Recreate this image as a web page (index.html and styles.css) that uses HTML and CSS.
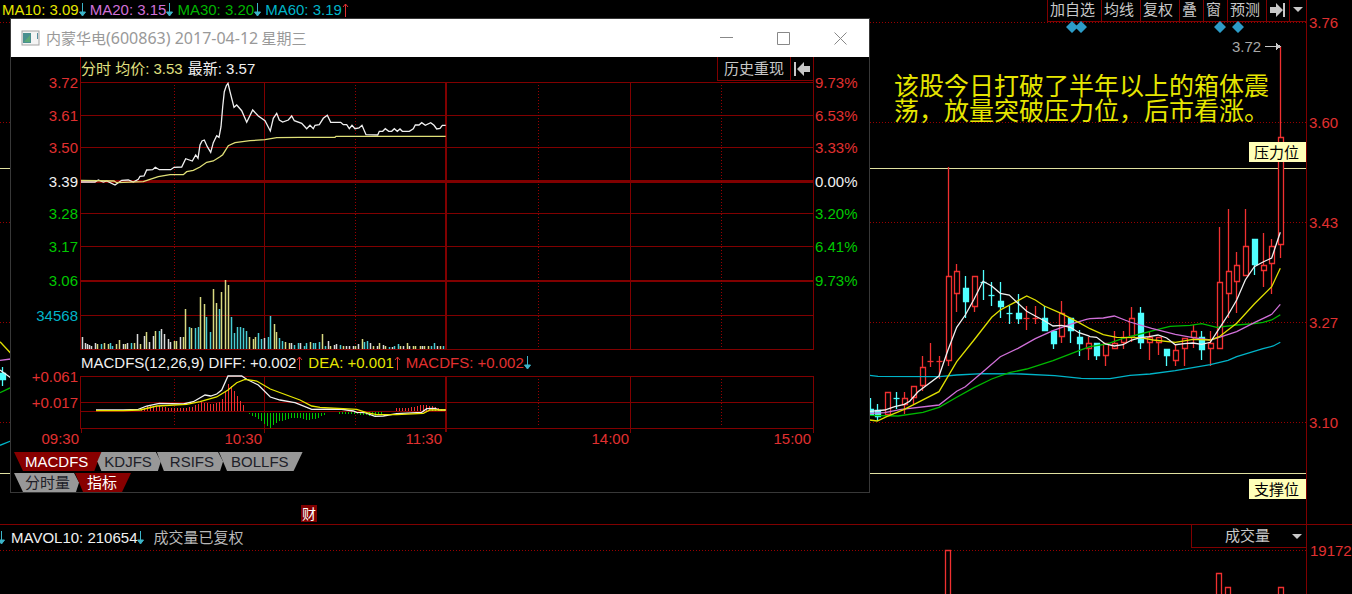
FILE: index.html
```html
<!DOCTYPE html>
<html lang="zh-CN">
<head>
<meta charset="utf-8">
<title>内蒙华电 600863</title>
<link rel="stylesheet" href="styles.css">
</head>
<body>
<svg class="defs" aria-hidden="true">
  <symbol id="down" viewBox="0 0 7 14"><path d="M3.500 0V11M0.500 9L3.500 13L6.500 9Z" fill="#3cb4c8" stroke="#3cb4c8"/></symbol>
  <symbol id="up" viewBox="0 0 7 14"><path d="M3.500 14V1M1 4L3.500 1L6 4" fill="none" stroke="#e03030"/></symbol>
</svg>
<main class="app">
  <section class="panel">
    <header class="bar price-bar">
      <div class="legend">
        <span class="yellow">MA10: 3.09</span><svg class="arrow"><use href="#down"/></svg>
        <span class="violet">MA20: 3.15</span><svg class="arrow"><use href="#down"/></svg>
        <span class="green">MA30: 3.20</span><svg class="arrow"><use href="#down"/></svg>
        <span class="cyan">MA60: 3.19</span><svg class="arrow"><use href="#up"/></svg>
      </div>
      <div class="toolbar">
        <button>加自选</button><button>均线</button><button>复权</button><button>叠</button><button>窗</button><button>预测</button>
        <button class="tool-end" aria-label="最后"><svg width="16" height="14" viewBox="0 0 16 14"><path d="M0 4H6V0L13 7L6 14V10H0ZM13 0H15V14H13Z" fill="#c8c8c8"/></svg></button>
        <button class="tool-menu" aria-label="更多"><svg width="10" height="6" viewBox="0 0 10 6"><path d="M0 0H10L5 5Z" fill="#c8c8c8"/></svg></button>
      </div>
    </header>
    <svg id="price" class="chart" viewBox="0 22 1352 502">
      <g class="dots"><path d="M0 22.500H1306M0 122.500H1306M0 222.500H1306M0 322.500H1306M0 422.500H1306"/></g>
      <path class="axis" d="M1306.500 22V524"/>
      <path class="level" d="M0 168.500H1306M0 473.500H1306"/>
      <g class="diamonds"><path d="M1066 27L1072 21L1078 27L1072 33ZM1075 27L1081 21L1087 27L1081 33ZM1214 27L1220 21L1226 27L1220 33ZM1232 27L1238 21L1244 27L1238 33Z"/></g>
      <g id="candles"></g>
      <g id="averages"></g>
      <text class="note" x="1232" y="52">3.72</text>
      <path d="M1265 46.500H1277" stroke="#c8c8c8"/><path d="M1276 43L1281 46.500L1276 50Z" fill="#c8c8c8"/>
      <foreignObject x="894" y="74" width="376" height="60"><p class="comment">该股今日打破了半年以上的箱体震荡，放量突破压力位，后市看涨。</p></foreignObject>
      <g class="flag"><rect x="1249" y="142" width="57" height="20"/><text x="1254" y="158">压力位</text></g>
      <g class="flag"><rect x="1249" y="479" width="57" height="20"/><text x="1254" y="495">支撑位</text></g>
      <g class="badge"><rect x="301" y="505" width="16" height="17"/><text x="302" y="519">财</text></g>
      <g class="scale"><text x="1309" y="28">3.76</text><text x="1309" y="128">3.60</text><text x="1309" y="228">3.43</text><text x="1309" y="328">3.27</text><text x="1309" y="428">3.10</text></g>
    </svg>
  </section>

  <section class="panel">
    <header class="bar volume-bar">
      <div class="legend">
        <svg class="arrow"><use href="#down"/></svg>
        <span class="white">MAVOL10: 210654</span><svg class="arrow"><use href="#down"/></svg>
        <span class="silver">成交量已复权</span>
      </div>
      <div class="picker">
        <select aria-label="指标"><option>成交量</option></select>
      </div>
    </header>
    <svg id="volume" class="chart" viewBox="0 550 1352 44">
      <g class="dots"><path d="M0 550.500H1306"/></g>
      <path class="axis" d="M1306.500 550V594"/>
      <g class="hollow"><path d="M945.500 600V550.500H950.500V600M1216.500 600V573.500H1221.500V600M1225.500 600V587.500H1230.500V600M1278.500 600V587.500H1283.500V600"/></g>
      <g class="scale"><text x="1310" y="556">19172</text></g>
    </svg>
  </section>

  <section class="window" role="dialog" aria-labelledby="window-title">
    <header class="titlebar">
      <svg width="20" height="16" viewBox="0 0 20 16"><rect x="1" y="1" width="17" height="14" fill="#f4f4f4" stroke="#a4a4a4"/><rect x="2" y="3" width="8" height="10" fill="#4a9090"/><path d="M3 12L9 5V12Z" fill="#5aa878"/><path d="M16.500 3V9" stroke="#5a90a0"/></svg>
      <h1 id="window-title">内蒙华电<span>(600863) 2017-04-12</span> 星期三</h1>
      <button aria-label="最小化"><svg width="13" height="13"><path d="M0 5.500H13"/></svg></button>
      <button aria-label="最大化"><svg width="13" height="13"><path d="M0.500 0.500H12.500V12.500H0.500Z"/></svg></button>
      <button aria-label="关闭"><svg width="13" height="13"><path d="M0.500 0.500L12.500 12.500M12.500 0.500L0.500 12.500"/></svg></button>
    </header>
    <div class="intraday-bar">
      <p class="legend"><span class="cream">分时 均价: 3.53</span><span class="white">最新: 3.57</span></p>
      <div class="toolbar">
        <button class="replay">历史重现</button>
        <button class="tool-first" aria-label="最前"><svg width="16" height="14" viewBox="0 0 16 14"><path d="M16 4H10V0L3 7L10 14V10H16ZM0 0H2V14H0Z" fill="#c8c8c8"/></svg></button>
      </div>
    </div>
    <svg class="chart" viewBox="11 81 858 270">
      <g class="grid">
        <path d="M81 82.500H813M81 115.500H813M81 147.500H813M81 213.500H813M81 246.500H813M81 315.500H813M81 349.500H813M80.500 81V350M264.500 82V350M630.500 82V350M813.500 81V350"/>
        <path class="thick" d="M81 280.500H813M446 82V350"/>
        <path class="zero" d="M81 181.500H813"/>
      </g>
      <g class="dots"><path d="M174.500 85V349M355.500 85V349M538.500 85V349M721.500 85V349"/></g>
      <g id="turnover"></g>
      <g id="intraday"></g>
      <g class="scale end"><text x="78" y="88">3.72</text><text x="78" y="121">3.61</text><text x="78" y="153">3.50</text><text class="mid" x="78" y="187">3.39</text><text class="low" x="78" y="219">3.28</text><text class="low" x="78" y="252">3.17</text><text class="low" x="78" y="286">3.06</text><text class="vol" x="78" y="321">34568</text></g>
      <g class="scale"><text x="815" y="88">9.73%</text><text x="815" y="121">6.53%</text><text x="815" y="153">3.33%</text><text class="mid" x="815" y="187">0.00%</text><text class="low" x="815" y="219">3.20%</text><text class="low" x="815" y="252">6.41%</text><text class="low" x="815" y="286">9.73%</text></g>
    </svg>
    <div class="legend macd-bar">
      <span class="white">MACDFS(12,26,9)</span>
      <span class="white">DIFF: +0.002</span><svg class="arrow"><use href="#up"/></svg>
      <span class="yellow">DEA: +0.001</span><svg class="arrow"><use href="#up"/></svg>
      <span class="red">MACDFS: +0.002</span><svg class="arrow"><use href="#down"/></svg>
    </div>
    <svg class="chart" viewBox="11 375 858 77">
      <g class="grid">
        <path d="M81 376.500H813M81 402.500H813M81 411.500H446M81 428.500H813M80.500 376V429M81.500 429V433M264.500 376V433M630.500 376V433M813.500 376V433"/>
        <path class="thick" d="M446 376V432"/>
      </g>
      <g class="dots"><path d="M174.500 379V427M355.500 379V427M538.500 379V427M721.500 379V427"/></g>
      <g id="macd"></g>
      <g class="scale end"><text x="78" y="382">+0.061</text><text x="78" y="408">+0.017</text><text x="79" y="444">09:30</text><text x="262" y="444">10:30</text><text x="442" y="444">11:30</text><text x="629" y="444">14:00</text><text x="811" y="444">15:00</text></g>
    </svg>
    <nav class="tabs" aria-label="指标">
      <button class="tab first active">MACDFS</button><button class="tab">KDJFS</button><button class="tab notch">RSIFS</button><button class="tab last">BOLLFS</button>
    </nav>
    <nav class="tabs" aria-label="视图">
      <button class="tab start">分时量</button><button class="tab last active">指标</button>
    </nav>
  </section>
</main>
<script src="charts.js"></script>
</body>
</html>
```
FILE: styles.css
```css
* { box-sizing: border-box; }

body {
  margin: 0;
  background: #000;
  color: #c8c8c8;
  font: 15px/20px "Liberation Sans", "Noto Sans CJK SC", sans-serif;
}

button, select {
  margin: 0;
  padding: 0;
  border: 0;
  border-radius: 0;
  background: none;
  color: inherit;
  font: inherit;
}

button { white-space: nowrap; }

.defs { position: absolute; width: 0; height: 0; }
.app { position: relative; overflow: clip; }

.bar { display: flex; justify-content: space-between; padding-right: 45px; }
.price-bar { height: 22px; }
.volume-bar { height: 26px; border-top: 1px solid #800000; }

.legend { display: flex; align-items: center; margin: 0; white-space: pre; }
.price-bar .legend { padding-left: 2px; height: 19px; }
.volume-bar .legend .white { margin-left: 2px; }
.volume-bar .legend .silver { margin-left: 5px; }
.volume-bar .arrow:first-child { margin-left: -2px; }
.arrow { width: 7px; height: 14px; margin-right: 4px; }

.yellow { color: #e6e600; }
.violet { color: #d070d8; }
.green { color: #00b400; }
.cyan { color: #00b4c8; }
.white { color: #f0f0f0; }
.silver { color: #b8b8b8; }
.cream { color: #e0e080; }
.red { color: #e03030; }

.toolbar { display: flex; border-right: 1px solid #800000; }
.toolbar button {
  display: flex;
  align-items: center;
  justify-content: center;
  padding: 0 6px 0 2px;
  border: solid #800000;
  border-width: 0 0 1px 1px;
}
.price-bar .toolbar button { padding-bottom: 2px; }
.toolbar .tool-end { width: 23px; padding-left: 2px; padding-right: 2px; }
.toolbar .tool-menu { width: 17px; padding-left: 2px; padding-right: 2px; }
.toolbar .replay { padding: 0 6px; }
.toolbar .tool-first { width: 23px; padding: 0 2px; }

.picker {
  position: relative;
  width: 116px;
  border-right: 1px solid #800000;
}
.picker select {
  display: block;
  width: 100%;
  height: 23px;
  padding-left: 33px;
  border: solid #800000;
  border-width: 0 0 1px 1px;
  appearance: none;
}
.picker::after {
  content: "";
  position: absolute;
  top: 9px;
  right: 4px;
  border: 5px solid transparent;
  border-top-color: #c8c8c8;
  border-bottom: 0;
}

.chart { display: block; width: 100%; height: auto; overflow: visible; }
.chart path { shape-rendering: crispEdges; }
.dots path { stroke: #980000; stroke-dasharray: 1 2; }
.axis, .grid path { fill: none; stroke: #800000; }
.grid .thick { stroke-width: 2; }
.grid .zero { stroke-width: 3; }
.level { stroke: #e0e0a0; }
.diamonds path { fill: #2c9cc8; shape-rendering: auto; }
.chart .hollow path { fill: none; stroke: #f03030; stroke-width: 1.3; shape-rendering: auto; }
.chart .hollow .box { fill: #000; }
.chart .solid path { fill: #50ffff; stroke: #50ffff; stroke-width: 1.3; shape-rendering: auto; }
.chart .line { fill: none; stroke-width: 1.3; shape-rendering: auto; }
.chart #turnover path { stroke-width: 1.5; shape-rendering: auto; }
.scale text { fill: #e03030; }
.scale .mid { fill: #f0f0f0; }
.scale .low { fill: #00c800; }
.scale .vol { fill: #00b4c8; }
.end { text-anchor: end; }
.note { fill: #a8a8a8; }
.comment {
  margin: 0;
  color: #e6e600;
  font-size: 25px;
  line-height: 25px;
}
.flag rect { fill: #ffffb8; }
.flag text { fill: #000; }
.badge rect { fill: #800000; }
.badge text { fill: #fff; font-size: 14px; }

.window {
  position: absolute;
  top: 18px;
  left: 10px;
  width: 860px;
  border: 1px solid #383838;
  background: #000;
}

.titlebar {
  display: flex;
  align-items: center;
  height: 38px;
  padding-left: 10px;
  background: #fff;
  color: #999;
}
.titlebar h1 {
  flex: 1;
  margin: 0 0 0 5px;
  font: 15px/20px "Noto Sans CJK SC", sans-serif;
}
.titlebar h1 span { font: 16px/20px "Noto Sans", sans-serif; }
.titlebar button { width: 57px; height: 36px; }
.titlebar button svg { display: block; margin: 0 auto; }
.titlebar button path { fill: none; stroke: #888; }

.intraday-bar {
  display: flex;
  justify-content: space-between;
  height: 24px;
  margin: 0 55px 0 69px;
  border-left: 1px solid #800000;
}
.intraday-bar .white { margin-left: 5px; }
.macd-bar { height: 24px; padding-left: 70px; }
.macd-bar .white:first-child { margin-right: 4px; }
.macd-bar .arrow { margin-right: 5px; }

.tabs { display: flex; height: 19px; margin-bottom: 2px; padding-left: 3px; }
.tabs:last-child { margin-bottom: 0; }
.tab {
  padding: 0 9px 0 7px;
  background: #989898;
  color: #202028;
  line-height: 19px;
}
.tab + .tab { margin-left: -4px; }
.tab.first {
  padding: 0 13px 0 11px;
  clip-path: polygon(0 0, 100% 0, calc(100% - 7px) 100%, 9px 100%);
}
.tab:not(.first):not(.last) { clip-path: polygon(4px 0, calc(100% - 5px) 0, 100% 50%, calc(100% - 3px) 100%, 4px 100%, 0 50%); }
.tab.notch:not(.last) {
  padding: 0 9px 0 13px;
  clip-path: polygon(0 0, calc(100% - 5px) 0, 100% 50%, calc(100% - 3px) 100%, 7px 100%);
}
.tab.start:not(.last) {
  padding: 0 9px 0 11px;
  clip-path: polygon(0 0, calc(100% - 5px) 0, 100% 50%, calc(100% - 3px) 100%, 9px 100%);
}
.tab.last {
  padding: 0 14px 0 12px;
  clip-path: polygon(0 0, 100% 0, calc(100% - 9px) 100%, 8px 100%);
}
.tab.active { background: #880000; color: #fff; }
```
FILE: charts.js
```js
const NS = "http://www.w3.org/2000/svg";

function add(parent, d, attrs) {
  const path = document.createElementNS(NS, "path");
  path.setAttribute("d", d);
  for (const key in attrs) path.setAttribute(key, attrs[key]);
  parent.appendChild(path);
}

// Series are stored in thirds of a pixel, relative to an origin.
function points(text, ox, oy) {
  return text.trim().split(/\s+/).map(p => {
    const [x, y] = p.split(",").map(Number);
    return [x / 3 + ox, y / 3 + oy];
  });
}

function line(id, color, ...parts) {
  const d = "M" + parts.flat().map(p => p.map(v => v.toFixed(1)).join(" ")).join("L");
  add(document.getElementById(id), d, { class: "line", stroke: color });
}

// Candles: kind (r hollow, c solid), x, body top, body bottom, high, low.
const candles = `c,870,409,414,398,414 c,877,410,416,404,421 r,887,392,414,392,414 c,896,398,399,392,409
r,904,398,404,392,414 r,913,386,397,386,404 r,922,367,385,356,391 r,930,361,362,343,367 r,939,361,362,356,379
r,948,276,360,167,366 r,956,271,293,264,312 c,965,288,301,276,318 r,974,276,306,276,312 c,983,282,283,270,300
c,991,295,296,282,306 c,1000,301,306,282,318 c,1009,313,314,306,324 c,1018,313,318,294,324 r,1026,318,319,306,330
r,1035,318,319,306,324 c,1044,318,330,306,330 c,1053,331,343,331,349 r,1061,313,336,301,343 c,1070,318,330,318,343
c,1079,337,343,330,356 r,1088,343,348,337,360 c,1096,343,355,343,360 r,1105,343,355,343,366 r,1114,343,348,331,348
r,1123,337,342,331,349 r,1131,318,336,307,342 c,1140,313,342,307,349 r,1149,337,342,331,360 r,1158,337,342,337,355
c,1166,349,355,349,366 r,1175,350,360,344,366 r,1184,338,348,338,366 r,1193,331,337,325,348 c,1201,337,349,331,360
r,1210,343,348,331,366 r,1219,282,348,227,348 r,1228,271,293,209,318 r,1236,265,281,252,313 r,1245,246,275,209,275
c,1254,239,264,239,275 r,1263,265,270,233,287 r,1271,246,263,239,294 r,1280,137,244,46,258 c,2,373,379,367,386`;

const root = document.getElementById("candles");
for (const kind of ["hollow", "solid"]) {
  const g = document.createElementNS(NS, "g");
  g.setAttribute("class", kind);
  root.appendChild(g);
  for (const row of candles.split(/\s+/)) {
    const [k, ...v] = row.split(",");
    if ((k === "r") !== (kind === "hollow")) continue;
    const [x, top, bottom, high, low] = v.map((n, i) => i ? Number(n) : Number(n) + 0.5);
    add(g, `M${x} ${high}V${low}`);
    if (bottom - top < 2) add(g, `M${x - 3} ${top + 0.5}H${x + 3}`);
    else add(g, `M${x - 2} ${top + 0.5}H${x + 3}V${bottom + 0.5}H${x - 2}Z`, { class: "box" });
  }
}

const L = t => points(t, 868, 240);
const R = t => points(t, 1090, 190);
line("averages", "#00b4c8", L("5,406 30,409 215,410 266,405 345,401 460,402 560,407 640,415 666,416"), R("0,566 60,566 120,556 180,552 256,542 361,524 414,511 440,500 519,476 550,468 571,457"));
line("averages", "#00b800", L("5,526 90,528 165,517 213,502 266,472 318,443 371,417 424,398 476,387 555,362 633,332"), R("0,470 50,462 99,445 151,432 204,418 240,409 300,406 335,401 380,412 440,405 493,401 519,397 545,390 571,374"));
line("averages", "#d070d8", L("5,520 50,518 100,508 213,495 266,454 292,440 345,395 397,350 450,325 502,296 555,272 607,253 655,238"), R("0,386 40,384 73,378 120,396 185,415 256,433 309,443 361,450 388,442 440,425 493,398 545,373 571,343"));
line("averages", "#e0e000", L("5,540 28,543 56,530 109,508 213,455 266,365 318,300 371,232 397,210 450,182 476,168 502,180 529,198 581,221 633,248"), R("0,416 40,434 80,442 151,443 190,450 256,457 309,448 361,450 388,440 440,400 493,342 545,290 571,235"));
line("averages", "#f0f0f0", L("5,514 50,510 80,500 109,493 125,484 150,455 213,408 240,330 266,262 292,225 318,178 345,124 371,138 397,160 424,165 450,190 476,214 502,228 529,242 555,258 581,256 607,262 633,278 660,287"), R("0,440 20,442 46,462 73,468 99,464 125,450 151,443 177,440 204,435 230,444 256,464 283,461 309,459 335,463 361,457 388,415 414,375 440,330 466,270 493,230 519,216 545,204 571,127"));
line("averages", "#e0e000", points("0,245 32,280", 0, 260));
line("averages", "#d070d8", points("0,301 32,297", 0, 260));
line("averages", "#f0f0f0", points("0,330 32,353", 0, 260));
line("averages", "#00b800", points("0,398 32,383", 0, 260));
line("averages", "#00b4c8", points("0,556 32,543", 0, 260));

const A = t => points(t, 0, 50);
const B = t => points(t, 200, 60);
line("intraday", "#f0f0f0", A("243,396 285,396 295,390 310,396 320,393 345,405 365,391 385,390 400,396 415,388 420,379 432,378 440,360 458,359 466,352 478,359 512,359 522,352 545,351 557,326 577,333 587,315 594,325 600,285 606,273 613,270 622,290 632,307 640,278 650,257 657,262 663,230 668,170 673,125 679,107 684,100 690,125 702,172 710,165 725,182 740,217 758,180 775,198 795,212 811,243 820,205 830,190 838,210 848,216"), B("265,180 275,168 283,182 305,190 320,206 330,196 340,206 345,196 358,194 370,175 382,166 392,187 422,187 430,194 440,194 448,206 456,196 465,206 477,204 486,196 498,224 533,225 538,214 548,214 556,206 566,214 575,214 583,206 592,214 600,207 607,214 628,214 640,206 646,195 657,195 665,188 676,196 692,188 702,196 710,207 720,205 727,196 737,196"));
line("intraday", "#e0e078", A("243,391 342,393 350,398 430,395 450,388 475,380 510,374 550,374 560,365 580,361 600,351 620,337 640,333 660,320 668,314 685,287 705,278 750,272 795,269 830,263"), B("300,232 405,232 408,229 737,229"));

// Turnover bars: x, top, colour key.
const colors = { w: "#d8d8d8", y: "#d8d880", c: "#48ccd4" };
function bars(text, ox, oy) {
  for (const row of text.trim().split(/\s+/)) {
    const [, x, y, k] = row.match(/(\d+),(\d+)(\w)/);
    const px = Math.floor(x / 3 + ox) + 0.5;
    add(document.getElementById("turnover"), `M${px} 349V${Math.round(y / 3 + oy)}`, { stroke: colors[k] });
  }
}
bars("248,230w 257,249w 262,252w 269,255w 274,257w 286,249w 293,253y 305,253c 312,249y 324,253y 331,250c 338,257c 350,253y 357,241y 369,253w 376,253y 383,250w 395,249c 402,249y 413,223w 421,253y 432,227w 440,215y 447,246w 459,227w 466,212y 478,212c 485,208w 493,223w 504,238w 511,246w 523,242y 530,242y 542,230w 549,230y 557,148y 568,200c 575,204y 587,204c 594,200c 601,110y 613,133y 620,171c 632,215c 639,88y 650,129y 657,148c 665,96y 676,61y 684,76y 695,170c 702,220c 711,200c 721,200c 729,205c 740,212c 747,230y 759,238y 766,230y 774,220c 785,238c 792,234w 804,230c 811,167c 823,193y 830,215y 838,234c", 0, 260);
bars("128,122c 137,126y 148,130y 155,130w 162,134c 174,130c 181,130w 193,138c 200,128c 212,125y 219,128c 226,128c 238,125c 246,102y 257,138c 264,122w 272,138y 284,134w 290,132w 302,134c 309,138y 320,138w 328,138w 340,138w 347,138y 354,132w 366,118y 373,125c 381,122c 392,130w 400,138y 411,138w 418,128y 430,134w 437,138y 448,142c 456,142w 463,138c 475,132c 482,138y 490,138w 501,130y 508,138w 520,138y 527,138y 540,138y 547,138w 554,138y 566,138y 573,138c 583,128c 592,138w 600,138y 610,138c", 240, 300);

// MACD histogram: heights are interpolated between the given samples, one bar per three pixels.
function histogram(samples, base, color) {
  let d = "";
  for (let i = 0; i < samples.length - 1; i++) {
    const [x0, y0] = samples[i], [x1, y1] = samples[i + 1];
    for (let x = Math.ceil(x0 / 3) * 3; x < x1; x += 3) {
      d += `M${x + 0.5} ${base}V${Math.round(y0 + (y1 - y0) * (x - x0) / (x1 - x0))}`;
    }
  }
  add(document.getElementById("macd"), d, { stroke: color });
}
histogram([[141, 410], [147, 406], [160, 406], [167, 408], [183, 408], [192, 407], [201, 402], [212, 404], [221, 401], [225, 391], [228, 384], [232, 387], [237, 396], [244, 407]], 411, "#f03030");
histogram([[394, 408], [408, 408], [416, 406], [422, 405], [434, 406], [440, 409], [445, 409]], 411, "#f03030");
histogram([[247, 413], [253, 416], [262, 422], [270, 428], [277, 422], [292, 418], [299, 418], [306, 420], [314, 419], [322, 416], [327, 413]], 413, "#00c800");
histogram([[337, 414], [356, 414], [370, 416], [376, 416], [383, 413]], 412, "#00c800");
const M = t => points(t, 0, 260);
const N = t => points(t, 240, 300);
line("macd", "#f0f0f0", M("288,450 345,450 370,450 415,448 440,438 478,430 550,432 580,425 615,405 632,408 650,402 665,390 684,348 725,348 740,358 775,375 811,411 840,420 880,427"), N("165,308 215,328 300,327 340,333 350,337 375,338 405,349 430,348 470,341 545,337 560,326 585,325 600,330 617,330"));
line("macd", "#e6e600", M("288,452 345,452 370,452 420,450 470,438 560,433 600,425 650,411 684,390 710,368 735,358 770,363 811,387 900,420"), N("180,300 215,318 240,322 350,328 380,338 410,344 470,344 550,340 570,330 617,330"));
```
